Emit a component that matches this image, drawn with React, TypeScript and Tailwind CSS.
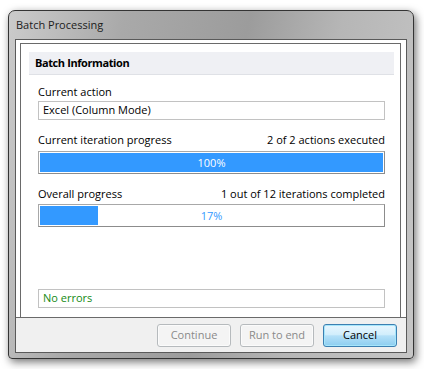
const FONT = "font-['Open_Sans','Noto_Sans',sans-serif]"

function ProgressBar({ value, light }: { value: number; light?: boolean }) {
  return (
    <div className="relative h-[23px] border border-[#a8a8a8] border-b-[#8c8c8c] border-r-[#8c8c8c] bg-white p-px">
      <div className="h-full bg-[#3399ff]" style={{ width: `${value}%` }} />
      <div
        className={`absolute inset-0 flex items-center justify-center text-[11px] leading-none ${
          light ? "text-white" : "text-[#3399ff]"
        }`}
      >
        {value}%
      </div>
    </div>
  )
}

function Row({ left, right }: { left: string; right?: string }) {
  return (
    <div className="flex h-[14px] items-center justify-between text-[11px] leading-none text-black">
      <span>{left}</span>
      {right && <span>{right}</span>}
    </div>
  )
}

function Button({ label, primary }: { label: string; primary?: boolean }) {
  if (primary) {
    return (
      <div className="flex h-[23px] w-[74px] items-center justify-center rounded-[3px] border border-[#3c7fb1] bg-[linear-gradient(180deg,#e8f6fe_0%,#d2eefc_45%,#b4e0f8_52%,#8ccdf0_100%)] text-[11px] text-black shadow-[inset_0_0_0_1px_#a6e6fb]">
        {label}
      </div>
    )
  }
  return (
    <div className="flex h-[23px] w-[74px] items-center justify-center rounded-[3px] border border-[#b6babd] bg-[#f4f4f4] text-[11px] text-[#8a8a8a] shadow-[inset_0_0_0_1px_#fbfbfb]">
      {label}
    </div>
  )
}

export default function App() {
  return (
    <div className={`h-[369px] w-[424px] bg-white pl-[8px] pt-[10px] ${FONT}`}>
      <div className="flex h-[349px] w-[406px] flex-col rounded-t-[7px] rounded-b-[4px] border border-[#343434] bg-[linear-gradient(100deg,#cbcbcb_0%,#a9a9a9_25%,#9c9c9c_52%,#b6b6b6_72%,#c6c6c6_100%)] px-[6px] pb-[5px] shadow-[2px_3px_8px_rgba(0,0,0,0.55)]">
        {/* Title bar */}
        <div className="flex h-[28px] shrink-0 items-center pl-[1px] pt-[1px] text-[11px] text-[#1c1c1c]">
          Batch Processing
        </div>

        {/* Client area */}
        <div className="flex flex-1 flex-col border border-[#5a5a5a] bg-white">
          <div className="flex flex-1 flex-col pl-[4px] pr-[5px] pt-[3px]">
            <div className="flex flex-1 flex-col border border-b-0 border-[#6a6a6a] pl-[8px] pr-[6px] pt-[8px]">
              <div className="flex h-[23px] items-center border-b border-[#dfe1e6] bg-[#eff0f4] pl-[6px] text-[11px] font-bold tracking-[-0.4px] text-black">
                Batch Information
              </div>
              <div className="flex flex-1 flex-col px-[9px] pt-[9px]">
                <Row left="Current action" />
                <div className="mt-[3px] flex h-[19px] items-center border border-[#c2c2c2] pl-[4px] text-[11px] text-black">
                  Excel (Column Mode)
                </div>
                <div className="mt-[12px]">
                  <Row left="Current iteration progress" right="2 of 2 actions executed" />
                </div>
                <div className="mt-[5px]">
                  <ProgressBar value={100} light />
                </div>
                <div className="mt-[12px]">
                  <Row left="Overall progress" right="1 out of 12 iterations completed" />
                </div>
                <div className="mt-[4px]">
                  <ProgressBar value={17} />
                </div>
                <div className="flex-1" />
                <div className="mb-[9px] flex h-[19px] items-center border border-[#c2c2c2] pl-[4px] text-[11px] text-[#138a13]">
                  No errors
                </div>
              </div>
            </div>
          </div>

          {/* Footer */}
          <div className="flex h-[35px] shrink-0 items-center justify-end gap-[9px] border-t border-[#6a6a6a] bg-[#f0f0f0] pr-[9px]">
            <Button label="Continue" />
            <Button label="Run to end" />
            <Button label="Cancel" primary />
          </div>
        </div>
      </div>
    </div>
  )
}
